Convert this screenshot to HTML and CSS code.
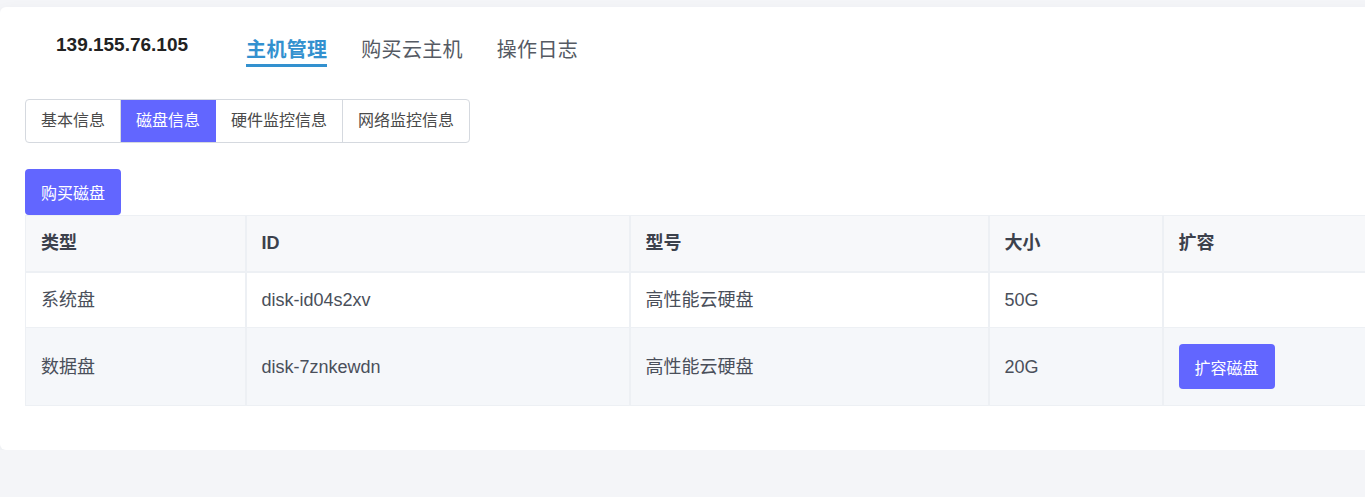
FILE: index.html
```html
<!DOCTYPE html>
<html lang="zh-CN">
<head>
<meta charset="utf-8">
<title>主机管理</title>
<link rel="stylesheet" href="styles.css">
</head>
<body>
<div class="card">
  <header class="top">
    <div class="ip">139.155.76.105</div>
    <nav class="nav">
      <a class="nav-item active">主机管理</a>
      <a class="nav-item">购买云主机</a>
      <a class="nav-item">操作日志</a>
    </nav>
  </header>

  <div class="tabs">
    <div class="tab">基本信息</div>
    <div class="tab active">磁盘信息</div>
    <div class="tab">硬件监控信息</div>
    <div class="tab">网络监控信息</div>
  </div>

  <button class="btn">购买磁盘</button>

  <table class="grid">
    <colgroup>
      <col class="c1"><col class="c2"><col class="c3"><col class="c4"><col class="c5">
    </colgroup>
    <thead>
      <tr><th>类型</th><th>ID</th><th>型号</th><th>大小</th><th>扩容</th></tr>
    </thead>
    <tbody>
      <tr><td>系统盘</td><td>disk-id04s2xv</td><td>高性能云硬盘</td><td>50G</td><td></td></tr>
      <tr class="alt"><td>数据盘</td><td>disk-7znkewdn</td><td>高性能云硬盘</td><td>20G</td><td><button class="btn">扩容磁盘</button></td></tr>
    </tbody>
  </table>
</div>
</body>
</html>
```

FILE: styles.css
```css
html, body {
  margin: 0;
  padding: 0;
}
body {
  background: #f4f5f8;
  padding-top: 7px;
  overflow: hidden;
  font-family: "Liberation Sans", "Noto Sans CJK SC", Arial, sans-serif;
  color: #4a4f5a;
}
.card {
  width: 1420px;
  box-sizing: border-box;
  background: #fff;
  border-radius: 6px;
  padding: 26px 25px 44px;
  box-shadow: 0 4px 14px rgba(40, 50, 80, 0.05);
}
.top {
  display: flex;
  align-items: flex-start;
}
.ip {
  margin-left: 31px;
  font-size: 19px;
  line-height: 24px;
  font-weight: bold;
  color: #222;
}
.nav {
  display: flex;
  gap: 34px;
  margin-left: 58px;
  margin-top: 3px;
}
.nav-item {
  font-size: 20px;
  line-height: 28px;
  padding-bottom: 0;
  border-bottom: 3px solid transparent;
  color: #555a63;
  letter-spacing: 0.3px;
  cursor: pointer;
}
.nav-item.active {
  color: #3391cf;
  font-weight: bold;
  border-bottom-color: #3391cf;
}
.tabs {
  display: inline-flex;
  margin-top: 32px;
  border: 1px solid #d5d9df;
  border-radius: 4px;
  overflow: hidden;
  vertical-align: top;
}
.tab {
  font-size: 16px;
  line-height: 42px;
  padding: 0 15px;
  color: #4a4a4a;
  border-right: 1px solid #d5d9df;
}
.tab:last-child {
  border-right: 0;
}
.tab.active {
  background: #6266ff;
  color: #fff;
  border-right-color: #6266ff;
}
.btn {
  display: block;
  height: 45px;
  padding: 0 16px;
  border: 0;
  border-radius: 4px;
  background: #6266ff;
  color: #fff;
  font-family: "Liberation Sans", "Noto Sans CJK SC", sans-serif;
  font-size: 16px;
  cursor: pointer;
}
.tabs + .btn {
  margin-top: 26px;
  height: 46px;
}
.grid {
  width: 1370px;
  border-collapse: collapse;
  table-layout: fixed;
  font-size: 18px;
}
.c1 { width: 220px; }
.c2 { width: 384px; }
.c3 { width: 359px; }
.c4 { width: 174px; }
.c5 { width: 233px; }
.grid th,
.grid td {
  text-align: left;
  padding: 16px 15px;
  border: 1px solid #edf0f4;
  border-right-width: 2px;
  line-height: 22px;
}
.grid th {
  background: #f7f8fa;
  color: #3c414c;
  font-weight: bold;
  line-height: 23px;
  border-bottom-width: 2px;
}
.grid td {
  color: #4a4f5a;
  background: #fff;
}
.grid tr.alt td {
  background: #f5f7fa;
}
```
